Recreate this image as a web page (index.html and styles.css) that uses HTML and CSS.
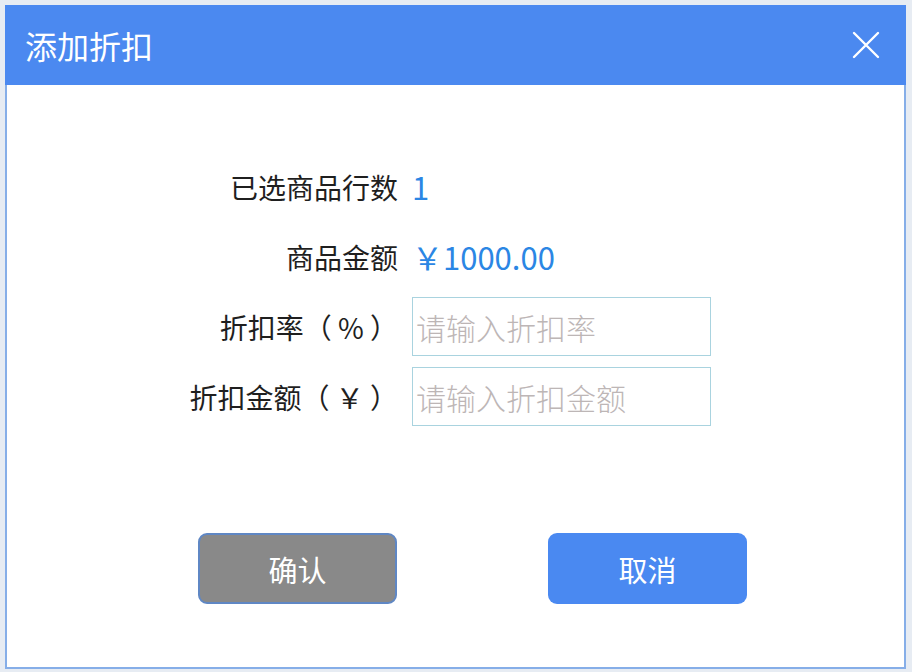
FILE: index.html
```html
<!DOCTYPE html>
<html lang="zh-CN">
<head>
<meta charset="utf-8">
<title>添加折扣</title>
<link rel="stylesheet" href="styles.css">
</head>
<body>
<div class="dialog">
  <div class="dialog-header">
    <span class="dialog-title">添加折扣</span>
    <svg class="close-icon" width="30" height="30" viewBox="0 0 30 30" aria-label="关闭">
      <path d="M3 3 L27 27 M27 3 L3 27" stroke="#ffffff" stroke-width="2.4" stroke-linecap="round" fill="none"/>
    </svg>
  </div>
  <div class="dialog-body">
    <div class="form">
      <div class="label">已选商品行数</div>
      <div class="value">1</div>
      <div class="label">商品金额</div>
      <div class="value">￥1000.00</div>
      <div class="label">折扣率（ % ）</div>
      <div class="field"><input class="input" type="text" placeholder="请输入折扣率"></div>
      <div class="label">折扣金额（ ￥ ）</div>
      <div class="field"><input class="input" type="text" placeholder="请输入折扣金额"></div>
    </div>
    <div class="actions">
      <button class="btn btn-confirm" type="button">确认</button>
      <button class="btn btn-cancel" type="button">取消</button>
    </div>
  </div>
</div>
</body>
</html>
```

FILE: styles.css
```css
html, body {
  margin: 0;
  padding: 0;
}
body {
  width: 912px;
  height: 672px;
  overflow: hidden;
  background: #e7ecf3;
  font-family: "Noto Sans CJK SC", "Noto Sans", sans-serif;
}
.dialog {
  box-sizing: border-box;
  margin: 5px 0 0 5px;
  width: 901px;
  height: 664px;
  background: #ffffff;
  border: 2px solid #86aee8;
  border-top: 0;
  display: flex;
  flex-direction: column;
}
.dialog-header {
  height: 80px;
  margin: 0 -2px;
  background: #4b89f0;
  display: flex;
  align-items: center;
  justify-content: space-between;
  padding: 0 25px 0 20px;
}
.dialog-title {
  color: #ffffff;
  font-size: 32px;
  line-height: 1;
}
.close-icon {
  display: block;
}
.dialog-body {
  flex: 1;
  padding-top: 72px;
}
.form {
  display: grid;
  grid-template-columns: 391px 300px;
  grid-auto-rows: 59px;
  column-gap: 14px;
  row-gap: 11px;
}
.label {
  display: flex;
  align-items: center;
  justify-content: flex-end;
  font-size: 28px;
  color: #1f1f1f;
  white-space: pre;
}
.value {
  display: flex;
  align-items: center;
  font-size: 31px;
  color: #2b86e4;
  padding-left: 0;
}
.field {
  display: flex;
}
.input {
  box-sizing: border-box;
  width: 299px;
  height: 59px;
  border: 1px solid #a9d3df;
  border-radius: 0;
  padding: 0 3px;
  margin: 0;
  font-family: "Noto Sans CJK SC", "Noto Sans", sans-serif;
  font-size: 30px;
  color: #333333;
  background: #ffffff;
  outline: none;
}
.input::placeholder {
  color: #bdb6b6;
  font-weight: 300;
}
.actions {
  display: flex;
  gap: 151px;
  padding-left: 191px;
  margin-top: 107px;
}
.btn {
  box-sizing: border-box;
  width: 199px;
  height: 71px;
  border-radius: 9px;
  font-family: "Noto Sans CJK SC", "Noto Sans", sans-serif;
  font-size: 29px;
  color: #ffffff;
  cursor: pointer;
  padding: 0;
}
.btn-confirm {
  background: #898989;
  border: 2px solid #5f87c4;
}
.btn-cancel {
  background: #4a89f1;
  border: 0;
}
```
